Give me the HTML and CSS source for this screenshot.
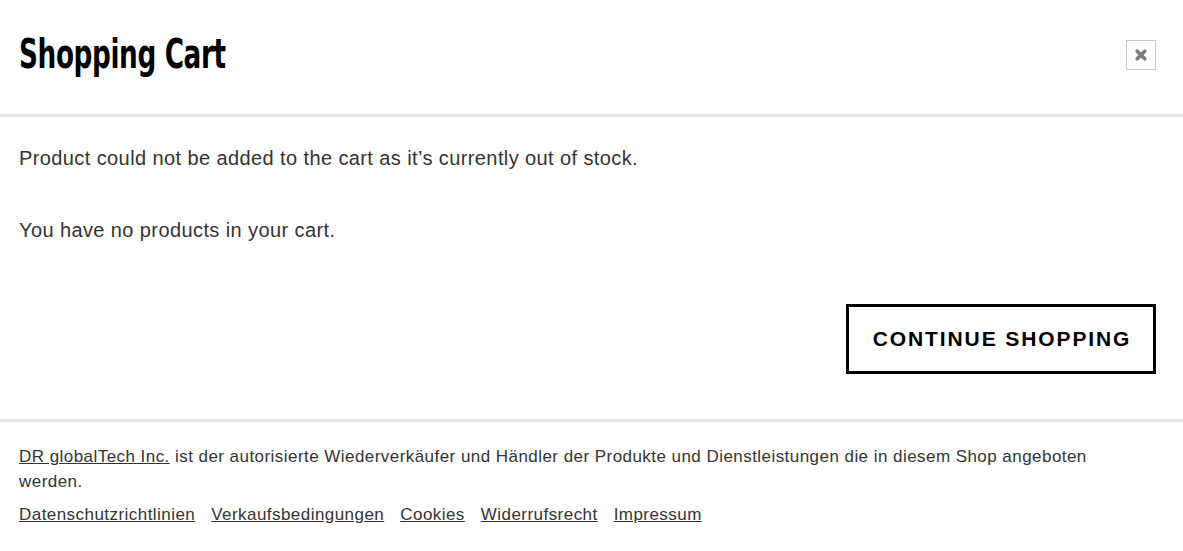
FILE: index.html
```html
<!DOCTYPE html>
<html lang="en">
<head>
<meta charset="utf-8">
<title>Shopping Cart</title>
<link rel="stylesheet" href="styles.css">
</head>
<body>
<div class="modal">
  <header class="modal-header">
    <h1 class="title"><span class="title-text">Shopping Cart</span></h1>
    <button class="close" aria-label="Close">
      <svg width="14" height="14" viewBox="0 0 14 14"><path d="M3.2 3.2 L10.8 10.8 M10.8 3.2 L3.2 10.8" stroke="#7a7a7a" stroke-width="3.6" stroke-linecap="round"/></svg>
    </button>
  </header>
  <section class="modal-body">
    <p class="msg">Product could not be added to the cart as it’s currently out of stock.</p>
    <p class="msg empty">You have no products in your cart.</p>
    <div class="actions">
      <button class="btn">CONTINUE SHOPPING</button>
    </div>
  </section>
  <footer class="modal-footer">
    <p class="legal"><a href="#">DR globalTech Inc.</a> ist der autorisierte Wiederverkäufer und Händler der Produkte und Dienstleistungen die in diesem Shop angeboten werden.</p>
    <nav class="links">
      <a href="#">Datenschutzrichtlinien</a>
      <a href="#">Verkaufsbedingungen</a>
      <a href="#">Cookies</a>
      <a href="#">Widerrufsrecht</a>
      <a href="#">Impressum</a>
    </nav>
  </footer>
</div>
</body>
</html>
```
FILE: styles.css
```css
html, body {
  margin: 0;
  padding: 0;
  background: #fff;
}
body {
  font-family: "Liberation Sans", Arial, sans-serif;
  color: #333;
}
.modal-header {
  display: flex;
  align-items: flex-start;
  justify-content: space-between;
  height: 114px;
  padding: 0 27px 0 19px;
  border-bottom: 3px solid #e3e3e3;
  box-sizing: content-box;
}
.title {
  margin: 31px 0 0;
  font-family: "DejaVu Sans Condensed", "DejaVu Sans", sans-serif;
  font-weight: bold;
  font-size: 40px;
  line-height: 46px;
  color: #000;
  letter-spacing: -0.5px;
}
.title-text {
  display: inline-block;
  transform: scaleX(0.73);
  transform-origin: left center;
}
.close {
  margin-top: 40px;
  width: 30px;
  height: 30px;
  border: 1px solid #c8c8c8;
  background: #fff;
  display: flex;
  align-items: center;
  justify-content: center;
  padding: 0;
}
.modal-body {
  padding: 0 27px 0 19px;
  border-bottom: 3px solid #e3e3e3;
}
.msg {
  margin: 0;
  font-size: 20px;
  letter-spacing: 0.4px;
  line-height: 24px;
}
.msg:first-child {
  padding-top: 29px;
}
.empty {
  margin-top: 48px;
}
.actions {
  display: flex;
  justify-content: flex-end;
  margin-top: 62px;
  padding-bottom: 45px;
}
.btn {
  width: 310px;
  height: 70px;
  border: 3px solid #000;
  background: #fff;
  font-family: "Liberation Sans", Arial, sans-serif;
  font-weight: bold;
  font-size: 21px;
  letter-spacing: 1.9px;
  color: #000;
  padding: 0 0 0 2px;
}
.modal-footer {
  padding: 22px 60px 0 19px;
  font-size: 17px;
  letter-spacing: 0.45px;
  line-height: 25px;
}
.legal {
  margin: 0;
}
.modal-footer a {
  color: #333;
  text-decoration: underline;
}
.links {
  display: flex;
  gap: 16px;
  margin-top: 8px;
}
```
